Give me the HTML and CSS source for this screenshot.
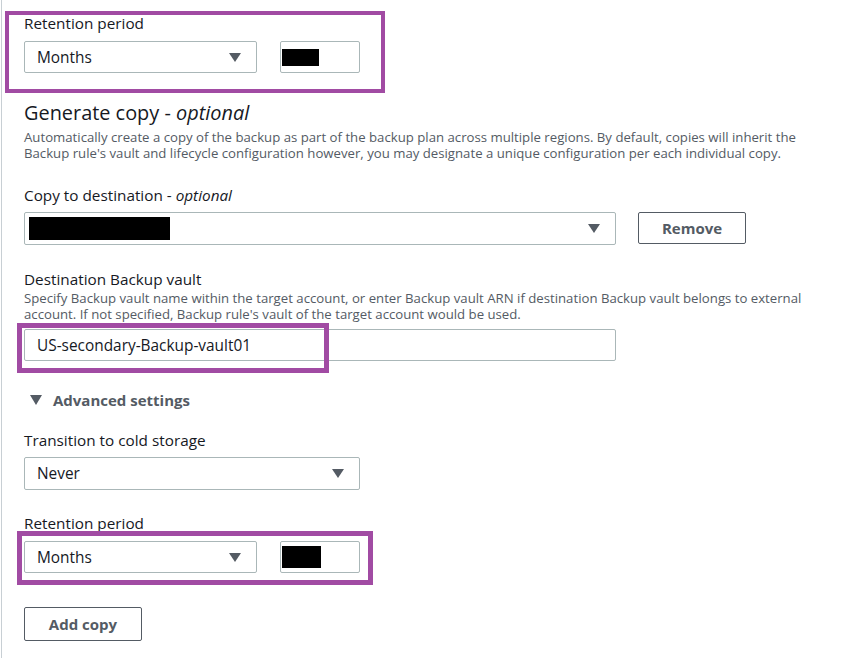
FILE: index.html
```html
<!DOCTYPE html>
<html>
<head>
<meta charset="utf-8">
<link rel="stylesheet" href="styles.css">
</head>
<body>
<div class="page">
  <div class="field field-ret1">
    <div class="label">Retention period</div>
    <div class="row">
      <div class="select sel-short"><span>Months</span><i class="caret"></i></div>
      <div class="input inp-num"><span class="redact r1"></span></div>
    </div>
    <div class="hl hl1"></div>
  </div>

  <h2 class="heading">Generate copy - <em>optional</em></h2>
  <p class="desc">Automatically create a copy of the backup as part of the backup plan across multiple regions. By default, copies will inherit the<br>Backup rule's vault and lifecycle configuration however, you may designate a unique configuration per each individual copy.</p>

  <div class="field field-copy">
    <div class="label">Copy to destination - <em>optional</em></div>
    <div class="row">
      <div class="select sel-wide"><span class="redact r2"></span><i class="caret"></i></div>
      <button class="btn btn-remove">Remove</button>
    </div>
  </div>

  <div class="field field-vault">
    <div class="label">Destination Backup vault</div>
    <p class="desc">Specify Backup vault name within the target account, or enter Backup vault ARN if destination Backup vault belongs to external<br>account. If not specified, Backup rule's vault of the target account would be used.</p>
    <div class="input-wrap">
      <div class="input inp-wide"><span>US-secondary-Backup-vault01</span></div>
      <div class="hl hl2"></div>
    </div>
  </div>

  <div class="expander"><i class="caret caret-exp"></i><span>Advanced settings</span></div>

  <div class="field field-cold">
    <div class="label">Transition to cold storage</div>
    <div class="select sel-mid"><span>Never</span><i class="caret"></i></div>
  </div>

  <div class="field field-ret2">
    <div class="label">Retention period</div>
    <div class="row">
      <div class="select sel-short"><span>Months</span><i class="caret"></i></div>
      <div class="input inp-num"><span class="redact r3"></span></div>
    </div>
    <div class="hl hl3"></div>
  </div>

  <button class="btn btn-add">Add copy</button>
</div>
</body>
</html>
```

FILE: styles.css
```css
* { box-sizing: border-box; }
html, body { margin: 0; padding: 0; background: #fff; }
body {
  font-family: "Open Sans", "Noto Sans", sans-serif;
  color: #16191f;
}
.page {
  margin-left: 1px;
  border-left: 1px solid #c8cfd4;
  padding: 12px 0 17px 22px;
  min-height: 658px;
}
.field { position: relative; }
.label {
  font-size: 15.3px;
  line-height: 22px;
  color: #16191f;
}
.label em { font-style: italic; }
.row { display: flex; align-items: flex-start; }
.select, .input {
  height: 32px;
  border: 1px solid #aab7b8;
  border-radius: 2px;
  background: #fff;
  display: flex;
  align-items: center;
  font-size: 15.4px;
  color: #16191f;
}
.select { position: relative; padding: 0 15px 0 12px; justify-content: space-between; }
.input { padding: 0 12px; }
.sel-short { width: 233px; }
.inp-num { width: 80px; margin-left: 23px; padding: 0 1px; }
.sel-wide { width: 592px; padding-left: 4px; height: 33px; }
.sel-mid { width: 336px; height: 33px; }
.inp-wide { width: 592px; }
.caret {
  display: block;
  width: 0; height: 0;
  border-left: 6px solid transparent;
  border-right: 6px solid transparent;
  border-top: 9px solid #545b64;
}
.redact { display: block; background: #000; }
.r1 { width: 37px; height: 17px; }
.r2 { width: 141px; height: 23px; }
.r3 { width: 39px; height: 22px; }

.field-ret1 .label { margin-bottom: 7px; }
.hl {
  position: absolute;
  border: 4px solid #a14ba3;
  pointer-events: none;
}
.hl1 { top: -1px; left: -19px; width: 380px; height: 82px; }

.heading {
  margin: 27px 0 0;
  font-size: 19.9px;
  line-height: 26px;
  font-weight: 400;
  color: #16191f;
}
.heading em { font-style: italic; }
.desc {
  margin: 3px 0 0;
  font-size: 13.2px;
  line-height: 16px;
  color: #545b64;
}
.field-copy { margin-top: 23px; }
.field-copy .label { margin-bottom: 6px; }
.btn {
  font-family: "Open Sans", "Noto Sans", sans-serif;
  height: 32px;
  border: 1px solid #545b64;
  border-radius: 2px;
  background: #fff;
  color: #545b64;
  font-weight: 700;
  font-size: 15px;
  padding: 0;
}
.btn-remove { width: 108px; margin-left: 22px; }

.field-vault { margin-top: 23px; }
.field-vault .desc { margin-top: 0; }
.input-wrap { position: relative; margin-top: 7px; }
.hl2 { top: -6px; left: -7px; width: 312px; height: 50px; border-width: 5px; }

.expander {
  margin-top: 28px;
  display: flex;
  align-items: center;
  font-size: 15px;
  line-height: 22px;
  font-weight: 700;
  color: #545b64;
  padding-left: 6px;
}
.caret-exp { margin-right: 11px; border-left-width: 6px; border-right-width: 6px; border-top-width: 10px; }

.field-cold { margin-top: 18px; }
.field-cold .label { margin-bottom: 6px; }

.field-ret2 { margin-top: 22px; }
.field-ret2 .label { margin-bottom: 7px; }
.hl3 { top: 19px; left: -7px; width: 356px; height: 54px; border-width: 5px; }

.btn-add { display: block; width: 118px; height: 34px; margin-top: 34px; }
```
